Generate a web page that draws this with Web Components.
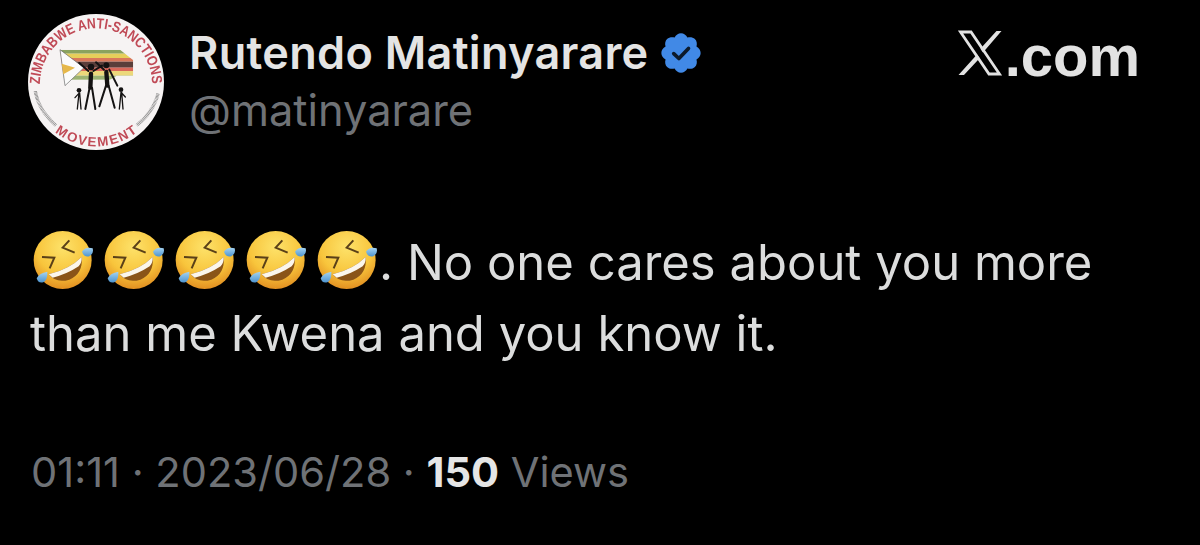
<!DOCTYPE html>
<html>
<head>
<meta charset="utf-8">
<title>Post</title>
<style>
  html, body { margin: 0; background: #000; }
  body { width: 1200px; height: 545px; overflow: hidden; font-family: Inter, "Liberation Sans", sans-serif; }
</style>
</head>
<body>
<post-card>
  <org-avatar slot="avatar"></org-avatar>
  <span slot="name">Rutendo Matinyarare</span>
  <span slot="handle">@matinyarare</span>
  <span slot="site">.com</span>
  <laugh-emoji></laugh-emoji><laugh-emoji></laugh-emoji><laugh-emoji></laugh-emoji><laugh-emoji></laugh-emoji><laugh-emoji></laugh-emoji>. No one cares about you more than me Kwena and you know it.
  <span slot="time">01:11 · 2023/06/28 · </span>
  <span slot="count">150</span>
  <span slot="views"> Views</span>
</post-card>

<script>
class PostCard extends HTMLElement {
    constructor() {
        super();
        const shadow = this.attachShadow({ mode: 'open' });
        shadow.innerHTML = `
        <style>
            :host {
                display: flex;
                flex-direction: column;
                box-sizing: border-box;
                width: 1200px;
                height: 545px;
                padding: 14px 60px 0 28px;
                color: #e7e9ea;
            }
            header {
                display: flex;
                align-items: flex-start;
                height: 144px;
            }
            .who {
                margin-left: 25px;
                padding-top: 13px;
                flex-grow: 1;
            }
            .name {
                display: flex;
                align-items: center;
                gap: 9px;
                font-size: 45px;
                font-weight: 600;
                letter-spacing: .3px;
                line-height: 52px;
                color: #e4e4e4;
            }
            .handle {
                font-size: 43.400px;
                line-height: 48px;
                margin-top: 7px;
                color: #6f7276;
            }
            .site {
                display: flex;
                align-items: flex-start;
                padding-top: 10px;
                font: bold 58px/63px "Liberation Sans", Arial, sans-serif;
                color: #e2e2e2;
            }
            .site svg { margin: 6px 2px 0 0; }
            .body {
                margin: 69px 0 0 2px;
                font-size: 49px;
                line-height: 71px;
                font-weight: 400;
                color: #dcdddd;
                width: 1090px;
            }
            footer {
                margin: 79px 0 0 3px;
                font-size: 41.600px;
                line-height: 48px;
                color: #6f7276;
            }
            ::slotted([slot=count]) { font-weight: 700; color: #e6e6e6; }
        </style>
        <header>
            <slot name="avatar"></slot>
            <div class="who">
                <div class="name">
                    <slot name="name"></slot>
                    <svg width="46" height="46" viewBox="0 0 24 24" aria-label="Verified account">
                        <path fill="#4189e6" d="M22.25 12c0-1.43-.88-2.67-2.19-3.34.46-1.39.2-2.9-.81-3.91s-2.52-1.27-3.91-.81c-.66-1.31-1.91-2.19-3.34-2.19s-2.67.88-3.33 2.19c-1.4-.46-2.91-.2-3.92.81s-1.26 2.52-.8 3.91c-1.31.67-2.2 1.91-2.2 3.34s.89 2.67 2.2 3.34c-.46 1.39-.21 2.9.8 3.91s2.52 1.26 3.91.81c.67 1.31 1.91 2.19 3.34 2.19s2.68-.88 3.34-2.19c1.39.45 2.9.2 3.91-.81s1.27-2.52.81-3.91c1.31-.67 2.19-1.91 2.19-3.34z"/>
                        <path fill="none" stroke="#0c1a2b" stroke-width="1.900" stroke-linecap="round" stroke-linejoin="round" d="M8.200 12.300l2.700 2.600 5-5.300"/>
                    </svg>
                </div>
                <div class="handle"><slot name="handle"></slot></div>
            </div>
            <div class="site">
                <svg width="46" height="46" viewBox="0 0 46 46" aria-label="X">
                    <path fill="none" stroke="currentColor" stroke-width="2.800" d="M3.500 2h10.500l28.500 42H32z"/>
                    <path fill="currentColor" d="M39.500 1h5L26 22.500l-2.600-3.700zM20 24.500l2.600 3.700L7 45H1.500z"/>
                </svg>
                <slot name="site"></slot>
            </div>
        </header>
        <div class="body"><slot></slot></div>
        <footer><slot name="time"></slot><slot name="count"></slot><slot name="views"></slot></footer>
        `;
    }
}

class OrgAvatar extends HTMLElement {
    constructor() {
        super();
        const shadow = this.attachShadow({ mode: 'open' });
        // the seal is in 3x coordinates, same as the crop it was measured from
        shadow.innerHTML = `
        <style>
            :host { display: block; width: 136px; height: 136px; flex: none; }
            svg { display: block; filter: blur(.4px); }
            text { font-family: "Liberation Sans", Arial, sans-serif; font-weight: bold; }
        </style>
        <svg width="136" height="136" viewBox="24 11 408 408" aria-label="Zimbabwe Anti-Sanctions Movement">
            <circle cx="228" cy="215" r="204" fill="#f6f3f3"/>
            <defs>
                <path id="top" d="M60 222A168 168 0 0 1 396 222"/>
                <path id="bot" d="M92 310A170 170 0 0 0 364 310"/>
                <clipPath id="fl"><path d="M120 118H300L340 150V196H290L240 226H135z"/></clipPath>
            </defs>
            <text font-size="44" fill="#c04a56"><textPath href="#top" startOffset="0" textLength="526" lengthAdjust="spacingAndGlyphs">ZIMBABWE ANTI-SANCTIONS</textPath></text>
            <text font-size="40" fill="#c04a56" dy="30"><textPath href="#bot" startOffset="50%" text-anchor="middle">MOVEMENT</textPath></text>
            <g clip-path="url(#fl)">
                <rect x="120" y="118" width="220" height="12" fill="#8aa35e"/>
                <rect x="120" y="130" width="220" height="13" fill="#e6cf5a"/>
                <rect x="120" y="143" width="220" height="11" fill="#d9785a"/>
                <rect x="120" y="154" width="220" height="18" fill="#5a3e3a"/>
                <rect x="120" y="172" width="220" height="10" fill="#d9685a"/>
                <rect x="120" y="182" width="220" height="14" fill="#ecd87a"/>
                <rect x="120" y="196" width="220" height="12" fill="#9cb372"/>
            </g>
            <path d="M120 118L192 172L135 226z" fill="#fbfbfb" stroke="#666" stroke-width="2"/>
            <path d="M125 160L165 172L130 192z" fill="#e6b84a"/>
            <g fill="none" stroke="#141212" stroke-linecap="round" stroke-linejoin="round">
                <g stroke-width="13">
                    <path d="M213 190L211 232"/>
                    <path d="M259 185L262 226"/>
                </g>
                <g stroke-width="6">
                    <path d="M205 182L178 158M220 182L246 166M252 178L228 156M268 178L292 226"/>
                    <path d="M209 232L196 296M216 232L226 296M258 226L238 288M266 226L284 292"/>
                </g>
                <g stroke-width="4">
                    <path d="M177 248L172 296M179 248L183 296M176 250L165 262"/>
                    <path d="M303 246L298 296M305 246L309 296M305 248L316 260"/>
                </g>
            </g>
            <g fill="#141212">
                <circle cx="213" cy="170" r="10"/>
                <circle cx="259" cy="165" r="9"/>
                <circle cx="177" cy="240" r="7"/>
                <circle cx="303" cy="238" r="7"/>
            </g>
            <g stroke="#808080" stroke-width="10" stroke-dasharray="2 2" fill="none">
                <path d="M46 243Q56 300 108 345"/>
                <path d="M414 250Q400 305 350 345"/>
            </g>
        </svg>
        `;
    }
}

class LaughEmoji extends HTMLElement {
    constructor() {
        super();
        const shadow = this.attachShadow({ mode: 'open' });
        shadow.innerHTML = `
        <style>
            :host { display: inline-block; width: 71px; height: 60px; vertical-align: -11px; }
            :host(:last-of-type) { width: 65px; }
            svg { display: block; margin-left: 1px; filter: blur(.3px); }
        </style>
        <svg width="65" height="60" viewBox="35 0 195 180" role="img" aria-label="rolling on the floor laughing">
            <defs>
                <radialGradient id="f" cx="50%" cy="28%" r="75%">
                    <stop offset="0" stop-color="#fde26a"/>
                    <stop offset=".6" stop-color="#f8c53c"/>
                    <stop offset="1" stop-color="#e08a1e"/>
                </radialGradient>
                <linearGradient id="t" x1="0" y1="0" x2="0" y2="1">
                    <stop offset="0" stop-color="#a5d4f2"/>
                    <stop offset="1" stop-color="#4c93cf"/>
                </linearGradient>
            </defs>
            <circle cx="130" cy="87" r="87" fill="url(#f)"/>
            <path d="M88 130Q150 115 187 78Q192 128 150 146Q110 158 88 130z" fill="#8a5418"/>
            <path d="M88 130Q150 115 187 78Q188 96 178 106Q142 130 100 140z" fill="#fbf6ec"/>
            <path d="M68 78L105 80L91 112" fill="none" stroke="#5a4018" stroke-width="6"/>
            <path d="M150 28L130 50L166 65" fill="none" stroke="#5a4018" stroke-width="6"/>
            <path d="M52 142Q60 126 84 122Q86 146 72 154Q56 158 52 142z" fill="url(#t)"/>
            <path d="M188 62Q198 46 220 52Q224 68 210 76Q194 80 188 62z" fill="url(#t)"/>
        </svg>
        `;
    }
}

customElements.define('laugh-emoji', LaughEmoji);
customElements.define('org-avatar', OrgAvatar);
customElements.define('post-card', PostCard);
</script>
</body>
</html>
